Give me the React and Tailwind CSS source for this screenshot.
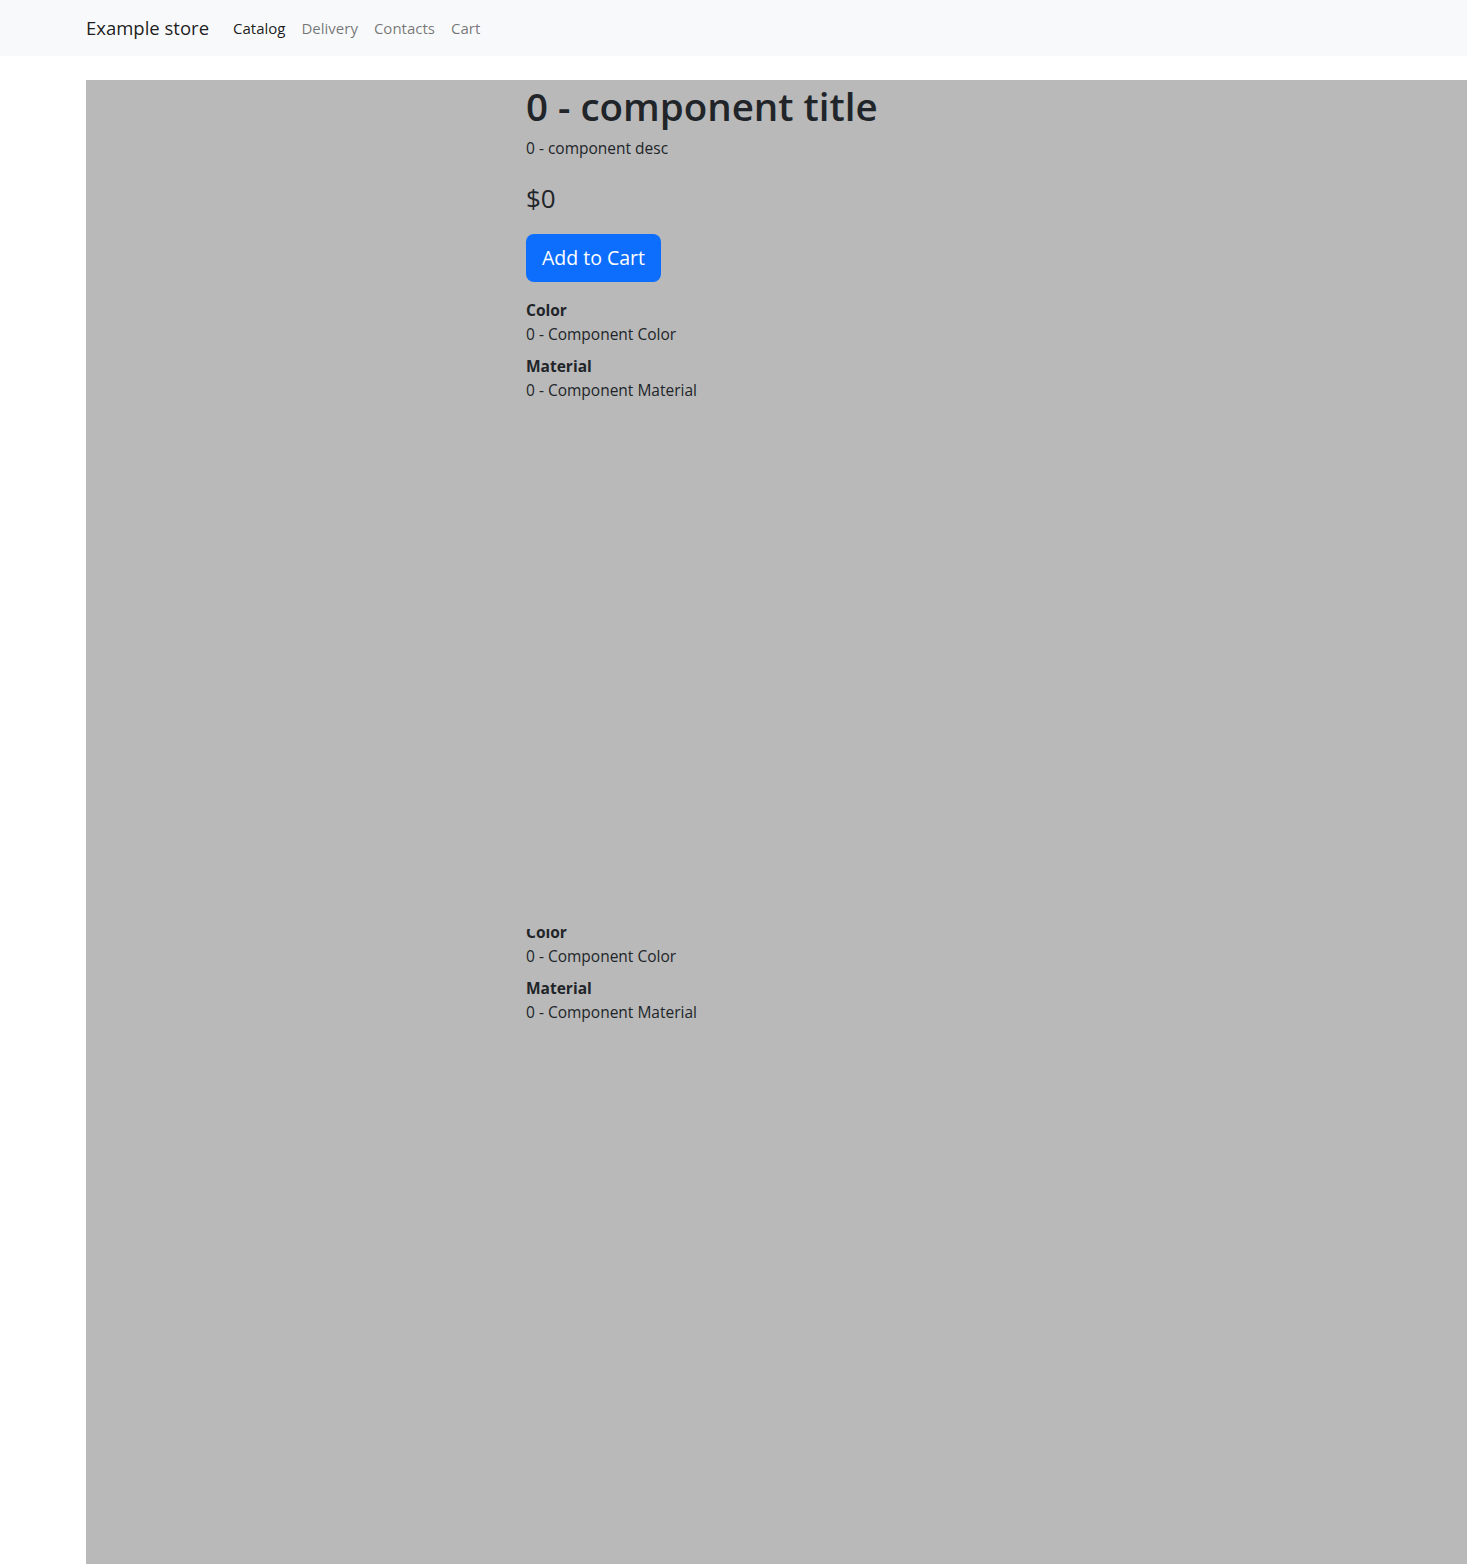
import React from "react";

const Specs = () => (
  <dl className="text-[15.5px] text-[#212529]">
    <dt className="font-bold leading-6">Color</dt>
    <dd className="leading-6 mb-2">0 - Component Color</dd>
    <dt className="font-bold leading-6">Material</dt>
    <dd className="leading-6 mb-2">0 - Component Material</dd>
  </dl>
);

const App = () => {
  return (
    <div className="min-h-screen bg-white font-['Open_Sans',sans-serif] text-[#212529] overflow-hidden">
      <nav className="bg-[#f8f9fa] h-14 flex items-center pl-[86px]">
        <a className="text-[18.5px] text-[rgba(0,0,0,0.9)] mr-6">Example store</a>
        <ul className="flex gap-4 text-[15px]">
          <li className="text-[rgba(0,0,0,0.9)]">Catalog</li>
          <li className="text-[rgba(0,0,0,0.55)]">Delivery</li>
          <li className="text-[rgba(0,0,0,0.55)]">Contacts</li>
          <li className="text-[rgba(0,0,0,0.55)]">Cart</li>
        </ul>
      </nav>

      <main className="mt-6 ml-[86px] bg-[#b9b9b9] h-[1484px] flex">
        <div className="w-[440px] shrink-0" />
        <div className="flex flex-col">
          <div className="h-[849px]">
            <h1 className="text-[38.5px] font-semibold leading-[46px] mt-[3px]">0 - component title</h1>
            <p className="text-[15.5px] leading-6 mt-[7px]">0 - component desc</p>
            <p className="text-[26px] leading-8 mt-[22px]">$0</p>
            <button className="mt-5 h-12 px-4 rounded-lg bg-[#0d6efd] text-white text-[19.5px]">
              Add to Cart
            </button>
            <div className="mt-4">
              <Specs />
            </div>
          </div>
          <div className="overflow-hidden">
            <div className="-mt-[9px]">
              <Specs />
            </div>
          </div>
        </div>
      </main>
    </div>
  );
};

export default App;
